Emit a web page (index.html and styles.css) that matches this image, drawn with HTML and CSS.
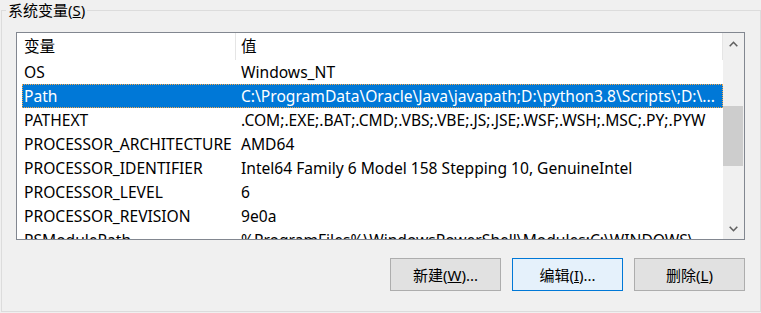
FILE: index.html
```html
<!DOCTYPE html>
<html lang="zh-CN">
<head>
  <meta charset="UTF-8">
  <title>系统变量</title>
  <link rel="stylesheet" href="styles.css">
</head>
<body>
  <fieldset class="group">
    <legend>系统变量(<u>S</u>)</legend>

    <div class="list">
      <div class="list-body">
        <div class="list-head">
          <div class="head-name">变量</div>
          <div class="head-value">值</div>
        </div>
        <div class="row"><span class="cell-name">OS</span><span class="cell-value">Windows_NT</span></div>
        <div class="row selected"><span class="cell-name">Path</span><span class="cell-value">C:\ProgramData\Oracle\Java\javapath;D:\python3.8\Scripts\;D:\...</span></div>
        <div class="row"><span class="cell-name">PATHEXT</span><span class="cell-value">.COM;.EXE;.BAT;.CMD;.VBS;.VBE;.JS;.JSE;.WSF;.WSH;.MSC;.PY;.PYW</span></div>
        <div class="row"><span class="cell-name">PROCESSOR_ARCHITECTURE</span><span class="cell-value">AMD64</span></div>
        <div class="row"><span class="cell-name">PROCESSOR_IDENTIFIER</span><span class="cell-value">Intel64 Family 6 Model 158 Stepping 10, GenuineIntel</span></div>
        <div class="row"><span class="cell-name">PROCESSOR_LEVEL</span><span class="cell-value">6</span></div>
        <div class="row"><span class="cell-name">PROCESSOR_REVISION</span><span class="cell-value">9e0a</span></div>
        <div class="row"><span class="cell-name">PSModulePath</span><span class="cell-value">%ProgramFiles%\WindowsPowerShell\Modules;C:\WINDOWS\...</span></div>
      </div>

      <!-- vertical scrollbar -->
      <div class="scrollbar">
        <div class="arrow">
          <svg width="9" height="6" viewBox="0 0 9 6"><polyline points="0.7,5.3 4.5,1.3 8.3,5.3" fill="none" stroke="#606060" stroke-width="1.6"/></svg>
        </div>
        <div class="track"><div class="thumb"></div></div>
        <div class="arrow">
          <svg width="9" height="6" viewBox="0 0 9 6"><polyline points="0.7,0.7 4.5,4.7 8.3,0.7" fill="none" stroke="#606060" stroke-width="1.6"/></svg>
        </div>
      </div>
    </div>

    <div class="buttons">
      <button class="btn">新建(<u>W</u>)...</button>
      <button class="btn focused">编辑(<u>I</u>)...</button>
      <button class="btn">删除(<u>L</u>)</button>
    </div>
  </fieldset>
</body>
</html>
```

FILE: styles.css
```css
body {
  margin: 0;
  background-color: #f0f0f0;
  font-family: "Noto Sans", "Noto Sans CJK SC", sans-serif;
  font-size: 15px;
  color: #000;
}

.group {
  box-sizing: border-box;
  width: 760px;
  margin: 0 0 0 1px;
  padding: 12px 15px 20px 4px;
  border: 1px solid #dcdcdc;
}

.group legend {
  padding: 0 2px;
  line-height: 20px;
}

.list {
  display: flex;
  box-sizing: border-box;
  width: 729px;
  height: 208px;
  margin-left: 10px;
  border: 1px solid #828790;
  background-color: #fff;
}

.list-body {
  flex: 1;
  overflow: hidden;
  font-size: 15.6px;
}

.list-head {
  display: flex;
  line-height: 27px;
}

.head-name {
  width: 211px;
  padding-left: 7px;
  border-right: 1px solid #e5e5e5;
}

.head-value {
  flex: 1;
  padding-left: 5px;
  border-right: 1px solid #e5e5e5;
}

.row {
  display: flex;
  height: 24px;
  line-height: 24px;
  margin-left: 5px;
  white-space: nowrap;
}

.cell-name {
  width: 211px;
  padding-left: 2px;
  flex-shrink: 0;
}

.cell-value {
  flex: 1;
  padding-left: 6px;
  overflow: hidden;
}

.selected {
  background-color: #0078d7;
  color: #fff;
  outline: 1px dotted #f7a84a;
  outline-offset: -1px;
}

.scrollbar {
  display: flex;
  flex-direction: column;
  width: 21px;
  background-color: #f0f0f0;
}

.arrow {
  display: flex;
  align-items: center;
  justify-content: center;
  height: 21px;
}

.track {
  flex: 1;
}

.thumb {
  height: 60px;
  margin: 52px 1px 0 0;
  background-color: #cdcdcd;
}

.buttons {
  display: flex;
  justify-content: flex-end;
  gap: 11px;
  margin-top: 18px;
}

.btn {
  box-sizing: border-box;
  width: 111px;
  height: 33px;
  padding: 0;
  border: 1px solid #adadad;
  background-color: #e1e1e1;
  font-family: inherit;
  font-size: 15px;
  color: #000;
}

.btn.focused {
  border-color: #0078d7;
  background-color: #e5f1fb;
}
```
